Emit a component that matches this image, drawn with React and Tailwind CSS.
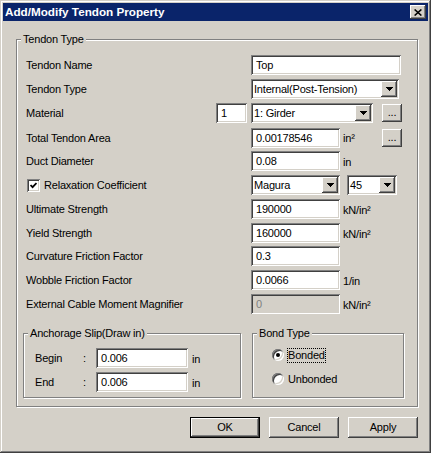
const sunken =
  "shadow-[inset_1px_1px_0_#808080,inset_-1px_-1px_0_#ffffff,inset_2px_2px_0_#404040,inset_-2px_-2px_0_#d4d0c8]";
const raised =
  "shadow-[inset_-1px_-1px_0_#404040,inset_1px_1px_0_#ffffff,inset_-2px_-2px_0_#808080,inset_2px_2px_0_#d4d0c8]";
const etched = "border border-[#808080] shadow-[inset_1px_1px_0_#ffffff,1px_1px_0_#ffffff]";

function Arrow() {
  return (
    <svg width="7" height="4" viewBox="0 0 7 4" shapeRendering="crispEdges">
      <path d="M0 0H7L3.5 4Z" fill="black" />
    </svg>
  );
}

function Edit({ w, value, disabled }) {
  return (
    <div
      className={`h-[20px] ${w} flex items-center pl-[5px] ${sunken} ${
        disabled ? "bg-[#d4d0c8] text-[#808080]" : "bg-white"
      }`}>
      {value}
    </div>
  );
}

function Combo({ w, value }) {
  return (
    <div className={`h-[20px] ${w} flex items-stretch p-[2px] bg-white ${sunken}`}>
      <div className="flex-1 flex items-center pl-[1px]">{value}</div>
      <div className={`w-[16px] flex items-center justify-center bg-[#d4d0c8] ${raised}`}>
        <Arrow />
      </div>
    </div>
  );
}

function Dots() {
  return (
    <div className={`w-[20px] h-[18px] ml-[9px] flex items-center justify-center pb-[2px] bg-[#d4d0c8] ${raised}`}>
      ...
    </div>
  );
}

function Group({ title, className, children }) {
  return (
    <div className={`relative ${etched} ${className}`}>
      <span className="absolute -top-[7px] left-[4px] px-[2px] leading-[13px] bg-[#d4d0c8]">{title}</span>
      {children}
    </div>
  );
}

function Row({ label, mt, children }) {
  return (
    <div className={`flex items-center h-[20px] ${mt}`}>
      <div className="w-[225px]">{label}</div>
      {children}
    </div>
  );
}

function Radio({ checked, label, focus }) {
  return (
    <div className="flex items-center h-[16px]">
      <div className={`w-[12px] h-[12px] rounded-full bg-white flex items-center justify-center ${sunken}`}>
        {checked && <div className="w-[4px] h-[4px] rounded-full bg-black" />}
      </div>
      <span className={`ml-[4px] leading-[13px] ${focus ? "outline-1 outline-dotted outline-black" : ""}`}>
        {label}
      </span>
    </div>
  );
}

function Button({ label, primary }) {
  return (
    <div
      className={`w-[70px] h-[21px] flex items-center justify-center bg-[#d4d0c8] ${raised} ${
        primary ? "border border-black" : ""
      }`}>
      {label}
    </div>
  );
}

export default function App() {
  return (
    <div className="w-[431px] h-[453px] p-[3px] bg-[#d4d0c8] text-[11px] tracking-[-0.2px] text-black font-['Liberation_Sans',Arial,sans-serif] shadow-[inset_-1px_-1px_0_#404040,inset_1px_1px_0_#d4d0c8,inset_-2px_-2px_0_#808080,inset_2px_2px_0_#ffffff] flex flex-col">
      {/* title bar */}
      <div className="h-[18px] flex items-center justify-between pl-[2px] pr-[2px] bg-[#0a246a]">
        <span className="font-bold text-white text-[11.7px] tracking-normal">Add/Modify Tendon Property</span>
        <div className={`w-[16px] h-[14px] flex items-center justify-center bg-[#d4d0c8] ${raised}`}>
          <svg width="8" height="7" viewBox="0 0 8 7">
            <path d="M0.6 0.5L7.4 6.5M7.4 0.5L0.6 6.5" stroke="black" strokeWidth="1.6" />
          </svg>
        </div>
      </div>

      <Group title="Tendon Type" className="mt-[18px] ml-[13px] w-[402px] h-[368px]">
        <div className="flex flex-col pt-[15px] pl-[9px]">
          <Row label="Tendon Name">
            <Edit w="w-[150px]" value="Top" />
          </Row>
          <Row label="Tendon Type" mt="mt-[4px]">
            <Combo w="w-[148px]" value="Internal(Post-Tension)" />
          </Row>
          <div className="flex items-center h-[20px] mt-[4px]">
            <div className="w-[190px]">Material</div>
            <Edit w="w-[31px]" value="1" />
            <div className="ml-[4px]">
              <Combo w="w-[122px]" value="1: Girder" />
            </div>
            <Dots />
          </div>
          <Row label="Total Tendon Area" mt="mt-[5px]">
            <Edit w="w-[89px]" value="0.00178546" />
            <span className="ml-[3px] w-[39px]">in²</span>
            <div className="-ml-[9px]">
              <Dots />
            </div>
          </Row>
          <Row label="Duct Diameter" mt="mt-[3px]">
            <Edit w="w-[89px]" value="0.08" />
            <span className="ml-[3px] mt-[3px]">in</span>
          </Row>
          <div className="flex items-center h-[20px] mt-[4px]">
            <div className="w-[225px] flex items-center">
              <div className={`ml-[1px] w-[13px] h-[13px] bg-white flex items-center justify-center ${sunken}`}>
                <svg width="7" height="7" viewBox="0 0 7 7">
                  <path d="M0.5 3L2.6 5.2L6.5 1" fill="none" stroke="black" strokeWidth="1.8" />
                </svg>
              </div>
              <span className="ml-[4px]">Relaxation Coefficient</span>
            </div>
            <Combo w="w-[89px]" value="Magura" />
            <div className="ml-[7px]">
              <Combo w="w-[50px]" value="45" />
            </div>
          </div>
          <Row label="Ultimate Strength" mt="mt-[4px]">
            <Edit w="w-[89px]" value="190000" />
            <span className="ml-[3px] mt-[3px]">kN/in²</span>
          </Row>
          <Row label="Yield Strength" mt="mt-[4px]">
            <Edit w="w-[89px]" value="160000" />
            <span className="ml-[3px] mt-[3px]">kN/in²</span>
          </Row>
          <Row label="Curvature Friction Factor" mt="mt-[3px]">
            <Edit w="w-[89px]" value="0.3" />
          </Row>
          <Row label="Wobble Friction Factor" mt="mt-[4px]">
            <Edit w="w-[89px]" value="0.0066" />
            <span className="ml-[3px] mt-[2px]">1/in</span>
          </Row>
          <Row label="External Cable Moment Magnifier" mt="mt-[4px]">
            <Edit w="w-[89px]" value="0" disabled />
            <span className="ml-[3px] mt-[3px]">kN/in²</span>
          </Row>
        </div>

        <div className="flex mt-[19px] pl-[6px] gap-[11px]">
          <Group title="Anchorage Slip(Draw in)" className="w-[218px] h-[65px]">
            <div className="flex flex-col pt-[14px] pl-[11px] gap-[4px]">
              {["Begin", "End"].map((l) => (
                <div key={l} className="flex items-center h-[20px]">
                  <span className="w-[48px]">{l}</span>
                  <span className="w-[13px]">:</span>
                  <Edit w="w-[92px]" value="0.006" />
                  <span className="ml-[4px] mt-[3px]">in</span>
                </div>
              ))}
            </div>
          </Group>
          <Group title="Bond Type" className="w-[152px] h-[65px]">
            <div className="flex flex-col pt-[13px] pl-[19px] gap-[8px]">
              <Radio checked focus label="Bonded" />
              <Radio label="Unbonded" />
            </div>
          </Group>
        </div>
      </Group>

      <div className="flex justify-end gap-[9px] mt-[10px] pr-[10px]">
        <Button label="OK" primary />
        <Button label="Cancel" />
        <Button label="Apply" />
      </div>
    </div>
  );
}
